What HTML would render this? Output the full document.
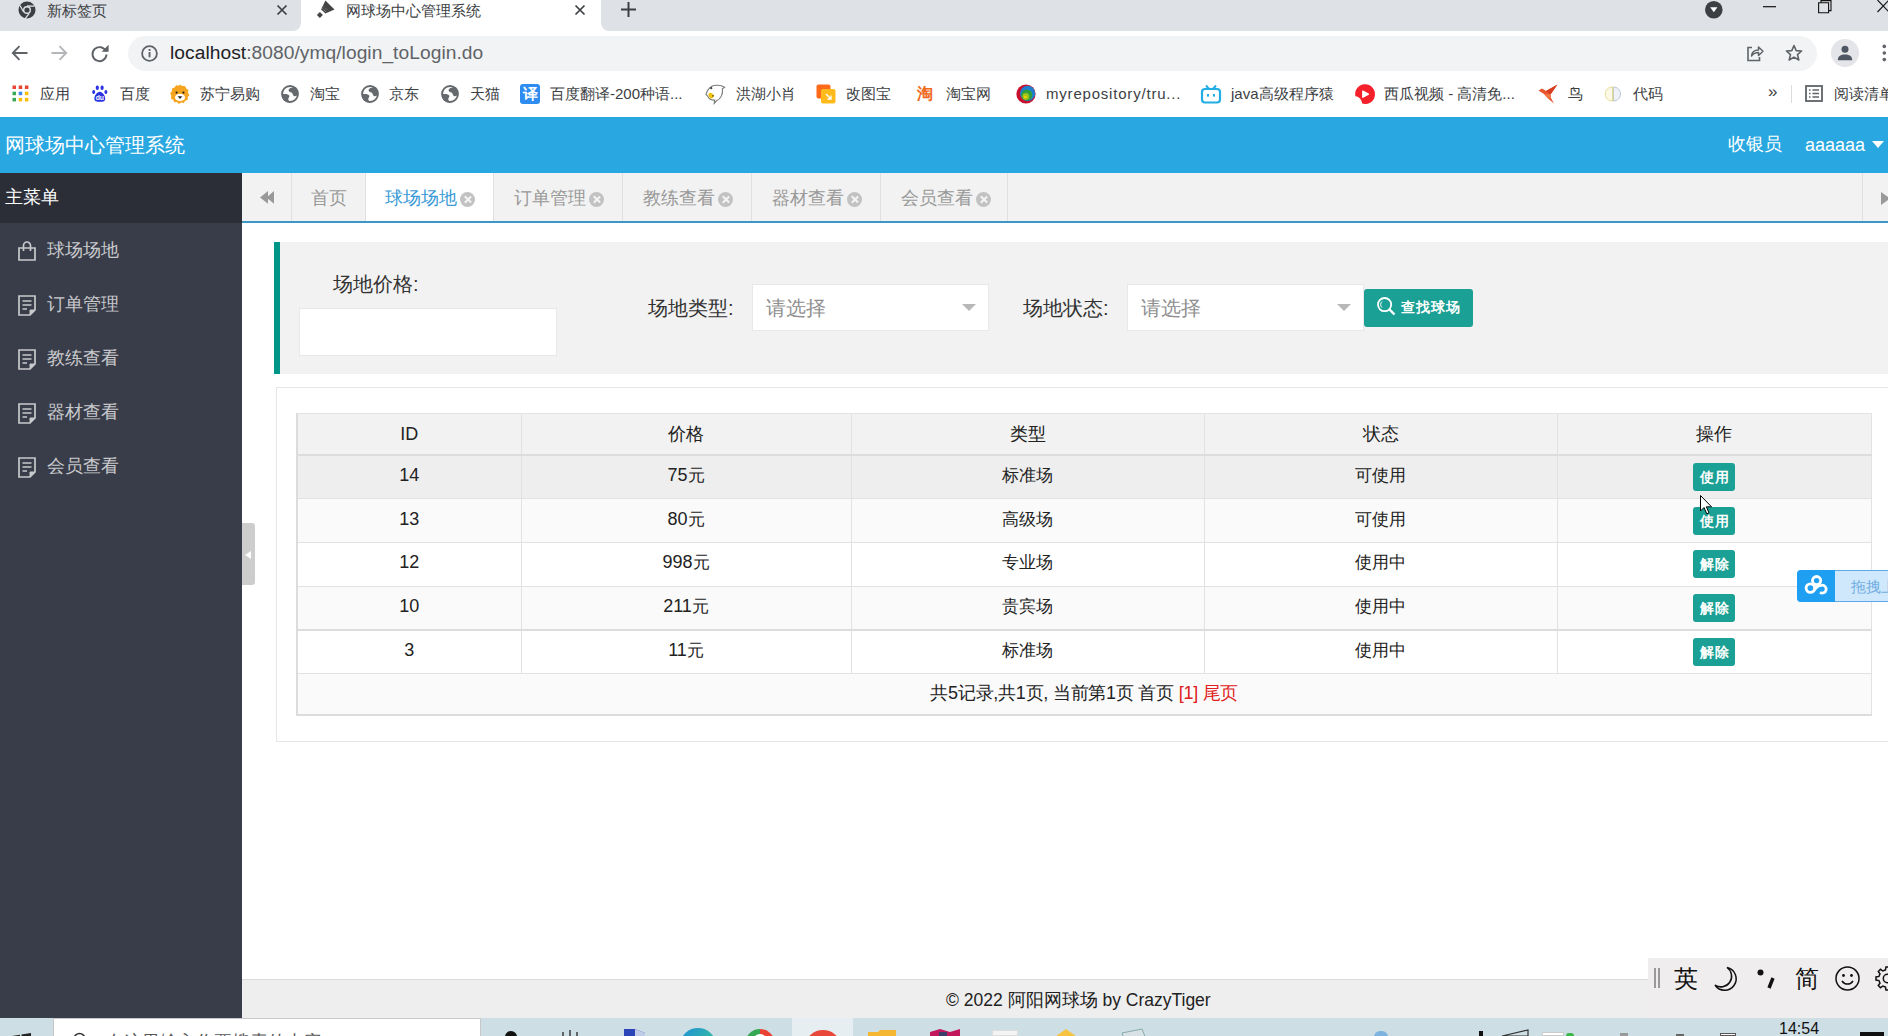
<!DOCTYPE html>
<html><head><meta charset="utf-8">
<style>
*{box-sizing:border-box;margin:0;padding:0}
html,body{width:1888px;height:1036px;overflow:hidden;background:#fff;font-family:"Liberation Sans",sans-serif;position:relative}
.a{position:absolute}
svg{position:absolute;overflow:visible}
.t15{position:absolute;font-size:15px;line-height:20px;color:#3c4043;white-space:nowrap}
/* app */
.mi{position:absolute;left:47px;font-size:18px;color:#c8c9cc;line-height:24px}
.tb{position:absolute;top:0;height:48px;border-left:1px solid #e0e0e0;font-size:18px;color:#999;line-height:50px;white-space:nowrap}
.x{display:inline-block;width:15px;height:15px;border-radius:50%;background:#c2c2c2;position:relative;vertical-align:middle;margin-left:3px;top:0px}
.x:before,.x:after{content:"";position:absolute;left:6.7px;top:3px;width:1.6px;height:9px;background:#f4f4f4;transform:rotate(45deg)}
.x:after{transform:rotate(-45deg)}
.lbl{position:absolute;font-size:20px;color:#333;line-height:24px;white-space:nowrap}
.inp{position:absolute;background:#fff;border:1px solid #e8e8e8}
.ph{position:absolute;font-size:20px;color:#8f8f8f;line-height:24px}
.caret{position:absolute;width:0;height:0;border-left:7px solid transparent;border-right:7px solid transparent;border-top:7px solid #b8b8b8}
table{position:absolute;left:296px;top:413px;border-collapse:collapse;font-size:17px;color:#222}
.n{font-size:18px}
td,th{border:1px solid #e2e2e2;text-align:center;font-weight:normal;height:43.8px;padding:0}
th{height:41.5px;border-bottom:2px solid #dcdcdc;padding-bottom:0;font-size:18px}
td{padding-bottom:3px}
table{border-left:2px solid #dcdcdc;border-bottom:2px solid #dcdcdc}
.r10 td{border-bottom:2px solid #dcdcdc}
.btn{display:inline-block;background:#1aa094;color:#fff;font-size:14px;line-height:28px;width:42px;height:28px;border-radius:3px;font-weight:bold;vertical-align:middle;position:relative;top:1.5px;left:0px;letter-spacing:1px;text-indent:1px}
</style></head><body>

<!-- ============ CHROME TAB STRIP ============ -->
<div class="a" style="left:0;top:0;width:301px;height:31px;background:#dee1e6;border-bottom-right-radius:8px"></div>
<div class="a" style="left:601px;top:0;width:1287px;height:31px;background:#dee1e6;border-bottom-left-radius:8px"></div>
<!-- chrome icon -->
<svg style="left:18px;top:1px" width="18" height="18" viewBox="0 0 18 18">
 <circle cx="9" cy="9" r="8.5" fill="#3c4043"/>
 <circle cx="9" cy="9" r="4" fill="#dee1e6"/>
 <circle cx="9" cy="9" r="2.6" fill="#3c4043"/>
 <path d="M9 5 L16.6 5.2" stroke="#dee1e6" stroke-width="1.3"/>
 <path d="M5.6 11 L2 4.5" stroke="#dee1e6" stroke-width="1.3"/>
 <path d="M11.2 12.3 L7.2 17.6" stroke="#dee1e6" stroke-width="1.3"/>
</svg>
<div class="t15" style="left:47px;top:1px">新标签页</div>
<svg style="left:277px;top:5px" width="10" height="10"><path d="M0.5 0.5L9.5 9.5M9.5 0.5L0.5 9.5" stroke="#3c4043" stroke-width="1.7"/></svg>
<!-- shuttlecock favicon -->
<svg style="left:317px;top:0px" width="19" height="19" viewBox="0 0 19 19"><path d="M8.4 0.5 L17.5 9.5 L8.4 13.5 L4.1 9.5Z" fill="#444"/><path d="M5.6 8.6 L9.6 12.4" stroke="#bbb" stroke-width="1" stroke-dasharray="1 1"/><path d="M7 6.5 L11 10.5" stroke="#999" stroke-width="0.8" stroke-dasharray="1 1.2"/><path d="M2.9 11.9 L5.9 14.9 L2.9 17.9 L-0.1 14.9Z" fill="#444"/></svg>
<div class="t15" style="left:346px;top:1px">网球场中心管理系统</div>
<svg style="left:575px;top:5px" width="10" height="10"><path d="M0.5 0.5L9.5 9.5M9.5 0.5L0.5 9.5" stroke="#3c4043" stroke-width="1.7"/></svg>
<svg style="left:621px;top:2px" width="15" height="15"><path d="M7.5 0V15M0 7.5H15" stroke="#3c4043" stroke-width="2"/></svg>
<!-- window controls -->
<svg style="left:1705px;top:1px" width="18" height="18"><circle cx="8.8" cy="8.8" r="8.8" fill="#3c4043"/><path d="M5.2 6.3H12.4L8.8 11.2Z" fill="#fff"/></svg>
<svg style="left:1763px;top:6px" width="14" height="2"><path d="M0 0.7H13" stroke="#111" stroke-width="1.2"/></svg>
<svg style="left:1818px;top:0px" width="15" height="14"><path d="M0.6 2.8H10.6V12.8H0.6Z M3 2.8V0.6H13V10.6H10.6" fill="none" stroke="#111" stroke-width="1.1"/></svg>
<svg style="left:1877px;top:0px" width="12" height="13"><path d="M0.5 0L12 12M12 0L0.5 12" stroke="#111" stroke-width="1.1"/></svg>

<!-- ============ TOOLBAR ============ -->
<svg style="left:11px;top:44px" width="18" height="18" viewBox="0 0 18 18"><path d="M16.5 9H2 M8.5 2.2L1.8 9L8.5 15.8" fill="none" stroke="#5f6368" stroke-width="1.9"/></svg>
<svg style="left:50px;top:44px" width="18" height="18" viewBox="0 0 18 18"><path d="M1.5 9H16 M9.5 2.2L16.2 9L9.5 15.8" fill="none" stroke="#b4b6ba" stroke-width="1.9"/></svg>
<svg style="left:91px;top:44px" width="18" height="18" viewBox="0 0 18 18"><path d="M15 7.5 A7 7 0 1 0 15.5 10.5" fill="none" stroke="#5f6368" stroke-width="1.9"/><path d="M17.6 0.8V7.8H10.6Z" fill="#5f6368"/></svg>
<div class="a" style="left:128px;top:36px;width:1689px;height:35px;border-radius:17.5px;background:#f1f3f4"></div>
<svg style="left:141px;top:45px" width="17" height="17" viewBox="0 0 17 17"><circle cx="8.5" cy="8.5" r="7.4" fill="none" stroke="#5f6368" stroke-width="1.8"/><rect x="7.6" y="7" width="1.9" height="5.3" fill="#5f6368"/><rect x="7.6" y="4" width="1.9" height="1.9" fill="#5f6368"/></svg>
<div class="a" style="left:170px;top:41px;font-size:19.2px;line-height:24px;color:#202124;white-space:nowrap;letter-spacing:0.05px">localhost<span style="color:#5f6368">:8080/ymq/login_toLogin.do</span></div>
<!-- share -->
<svg style="left:1746px;top:45px" width="18" height="17" viewBox="0 0 18 17"><path d="M6 2.5H2V15.5H13.5V12" fill="none" stroke="#5f6368" stroke-width="1.6"/><path d="M5.5 11 C6 6.5 9 5 12.5 5 V2 L17 6.3 L12.5 10.5 V7.6 C9.5 7.6 7.5 8.5 5.5 11Z" fill="none" stroke="#5f6368" stroke-width="1.5" stroke-linejoin="round"/></svg>
<!-- star -->
<svg style="left:1785px;top:44px" width="18" height="18" viewBox="0 0 18 18"><path d="M9 1.5L11.2 6.6L16.6 7L12.5 10.6L13.8 16L9 13.1L4.2 16L5.5 10.6L1.4 7L6.8 6.6Z" fill="none" stroke="#5f6368" stroke-width="1.6" stroke-linejoin="round"/></svg>
<!-- profile -->
<div class="a" style="left:1831px;top:39px;width:28px;height:28px;border-radius:50%;background:#e3e5e8"></div>
<svg style="left:1837px;top:45px" width="16" height="16" viewBox="0 0 16 16"><circle cx="8" cy="4.3" r="3.5" fill="#4e5563"/><path d="M0.8 15.2C0.8 11 4 9.6 8 9.6S15.2 11 15.2 15.2Z" fill="#4e5563"/></svg>
<svg style="left:1882px;top:44px" width="5" height="18"><circle cx="2.3" cy="2.4" r="1.8" fill="#5f6368"/><circle cx="2.3" cy="9" r="1.8" fill="#5f6368"/><circle cx="2.3" cy="15.6" r="1.8" fill="#5f6368"/></svg>

<!-- ============ BOOKMARKS ============ -->
<svg style="left:12px;top:85px" width="17" height="17" viewBox="0 0 17 17">
 <rect x="0.5" y="0.5" width="3.5" height="3.5" fill="#ea4335"/><rect x="6.7" y="0.5" width="3.5" height="3.5" fill="#ea4335"/><rect x="12.9" y="0.5" width="3.5" height="3.5" fill="#ea4335"/>
 <rect x="0.5" y="6.7" width="3.5" height="3.5" fill="#34a853"/><rect x="6.7" y="6.7" width="3.5" height="3.5" fill="#4285f4"/><rect x="12.9" y="6.7" width="3.5" height="3.5" fill="#fbbc05"/>
 <rect x="0.5" y="12.9" width="3.5" height="3.5" fill="#34a853"/><rect x="6.7" y="12.9" width="3.5" height="3.5" fill="#fbbc05"/><rect x="12.9" y="12.9" width="3.5" height="3.5" fill="#fbbc05"/>
</svg>
<div class="t15" style="left:40px;top:84px">应用</div>
<svg style="left:92px;top:85px" width="17" height="18" viewBox="0 0 17 18"><ellipse cx="5.3" cy="2.8" rx="1.6" ry="2.3" fill="#2932e1"/><ellipse cx="10.1" cy="2.8" rx="1.6" ry="2.3" fill="#2932e1"/><ellipse cx="1.7" cy="7" rx="1.5" ry="2" fill="#2932e1"/><ellipse cx="13.9" cy="7" rx="1.5" ry="2" fill="#2932e1"/><path d="M7.8 6.8C5 6.8 2.2 11 2.4 14 C2.6 17 5.5 16.8 7.8 16.8 S13 17 13.2 14 C13.4 11 10.6 6.8 7.8 6.8Z" fill="#2932e1"/><text x="7.8" y="15.4" font-size="6.8" font-family="Liberation Sans" fill="#fff" text-anchor="middle" font-weight="bold">du</text></svg>
<div class="t15" style="left:120px;top:84px">百度</div>
<svg style="left:170px;top:84px" width="20" height="20" viewBox="0 0 20 20"><path d="M10 0.5 L12.3 2.1 15.1 1.9 16.1 4.5 18.5 5.9 17.9 8.6 19.5 10.9 17.7 13 17.8 15.8 15.2 16.7 13.8 19.1 11 18.6 8.9 19.9 6.9 18.1 4.1 18.3 3.2 15.7 0.8 14.4 1.4 11.7 0.1 9.3 1.9 7.3 2 4.5 4.6 3.6 6.1 1.2 8.8 1.7Z" fill="#f5a51f"/><ellipse cx="10" cy="13.4" rx="5" ry="3.6" fill="#fff"/><circle cx="6.6" cy="8.6" r="1.1" fill="#222"/><circle cx="13.4" cy="8.6" r="1.1" fill="#222"/><path d="M7.7 12.2H12.3L10 15Z" fill="#222"/></svg>
<div class="t15" style="left:200px;top:84px">苏宁易购</div>
<svg style="left:281px;top:85px" width="18" height="18" viewBox="0 0 18 18"><defs><clipPath id="gc1"><circle cx="9" cy="9" r="8.9"/></clipPath></defs><g clip-path="url(#gc1)"><circle cx="9" cy="9" r="9" fill="#fff"/><path d="M10.5 2.8 C8.2 3.2 6.8 5.2 8.2 6.6 C9.8 7.8 11.2 7.2 11.8 9.4 C12.4 11.6 15 11.6 17 10 L17 2 C15 1.5 12.5 2.4 10.5 2.8Z" fill="#65686c"/><path d="M1 9.3 C3.5 8.6 7.6 8.8 8.3 10.6 C8.9 12.2 7 12.8 7.3 14.5 C7.6 15.8 8.8 16.5 9 17.5 L0 17.5Z" fill="#65686c"/></g><circle cx="9" cy="9" r="7.95" fill="none" stroke="#65686c" stroke-width="1.9"/></svg>
<div class="t15" style="left:310px;top:84px">淘宝</div>
<svg style="left:361px;top:85px" width="18" height="18" viewBox="0 0 18 18"><defs><clipPath id="gc2"><circle cx="9" cy="9" r="8.9"/></clipPath></defs><g clip-path="url(#gc2)"><circle cx="9" cy="9" r="9" fill="#fff"/><path d="M10.5 2.8 C8.2 3.2 6.8 5.2 8.2 6.6 C9.8 7.8 11.2 7.2 11.8 9.4 C12.4 11.6 15 11.6 17 10 L17 2 C15 1.5 12.5 2.4 10.5 2.8Z" fill="#65686c"/><path d="M1 9.3 C3.5 8.6 7.6 8.8 8.3 10.6 C8.9 12.2 7 12.8 7.3 14.5 C7.6 15.8 8.8 16.5 9 17.5 L0 17.5Z" fill="#65686c"/></g><circle cx="9" cy="9" r="7.95" fill="none" stroke="#65686c" stroke-width="1.9"/></svg>
<div class="t15" style="left:389px;top:84px">京东</div>
<svg style="left:441px;top:85px" width="18" height="18" viewBox="0 0 18 18"><defs><clipPath id="gc3"><circle cx="9" cy="9" r="8.9"/></clipPath></defs><g clip-path="url(#gc3)"><circle cx="9" cy="9" r="9" fill="#fff"/><path d="M10.5 2.8 C8.2 3.2 6.8 5.2 8.2 6.6 C9.8 7.8 11.2 7.2 11.8 9.4 C12.4 11.6 15 11.6 17 10 L17 2 C15 1.5 12.5 2.4 10.5 2.8Z" fill="#65686c"/><path d="M1 9.3 C3.5 8.6 7.6 8.8 8.3 10.6 C8.9 12.2 7 12.8 7.3 14.5 C7.6 15.8 8.8 16.5 9 17.5 L0 17.5Z" fill="#65686c"/></g><circle cx="9" cy="9" r="7.95" fill="none" stroke="#65686c" stroke-width="1.9"/></svg>
<div class="t15" style="left:470px;top:84px">天猫</div>
<div class="a" style="left:520px;top:84px;width:20px;height:20px;border-radius:3px;background:#2e8cf0;color:#fff;font-size:15px;line-height:20px;text-align:center;font-weight:bold">译</div>
<div class="t15" style="left:550px;top:84px">百度翻译-200种语...</div>
<svg style="left:705px;top:83px" width="22" height="22" viewBox="0 0 22 22"><path d="M6.5 3.5 C9.5 1.5 15.5 1.8 19.6 4.2 L17.4 5.8 C18.2 10.5 16 16 11.5 17.8 L9.2 20.4 L9.6 17 C6.5 17.5 3.5 15 2.2 12.5 L1 11.4 C2.2 7.5 3.8 5.2 6.5 3.5Z" fill="#fff" stroke="#7a7a7a" stroke-width="1.1"/><path d="M3.5 10.5 C5 9 8 10 8.5 12.5 C9 15 6.5 16.5 5 15 C3.8 14 3.2 12 3.5 10.5Z" fill="#f2c40f"/><circle cx="6.2" cy="5.2" r="1.1" fill="#444"/><path d="M7 13 L9 12.8" stroke="#5a3a00" stroke-width="1"/></svg>
<div class="t15" style="left:736px;top:84px">洪湖小肖</div>
<svg style="left:816px;top:84px" width="20" height="20" viewBox="0 0 20 20"><rect x="0.5" y="0.5" width="14" height="14" rx="2" fill="#ff6a1a"/><rect x="5" y="5" width="14.5" height="14.5" rx="2" fill="#ffbb1c"/><path d="M10 10L15 15M15 11.5V15H11.5" stroke="#fff" stroke-width="1.3" fill="none"/></svg>
<div class="t15" style="left:846px;top:84px">改图宝</div>
<div class="a" style="left:917px;top:84px;width:20px;height:20px;color:#f06a1e;font-size:16px;line-height:20px;font-weight:bold">淘</div>
<div class="t15" style="left:946px;top:84px">淘宝网</div>
<svg style="left:1016px;top:84px" width="20" height="20" viewBox="0 0 20 20"><circle cx="10" cy="10" r="9.6" fill="#c8102e"/><circle cx="11.6" cy="9.4" r="7.6" fill="#1d7fd0"/><circle cx="10.8" cy="11" r="5.6" fill="#2e9e3e"/><circle cx="9.8" cy="12.4" r="3.4" fill="#9cc31a"/><circle cx="9.4" cy="13" r="1.5" fill="#f5d000"/></svg>
<div class="t15" style="left:1046px;top:84px;letter-spacing:0.8px">myrepository/tru...</div>
<svg style="left:1201px;top:84px" width="20" height="20" viewBox="0 0 20 20"><rect x="1" y="5" width="18" height="13.5" rx="3" fill="none" stroke="#23ade5" stroke-width="2.2"/><path d="M5 1.5L8 5M15 1.5L12 5" stroke="#23ade5" stroke-width="2"/><rect x="6" y="10" width="2" height="2.6" fill="#23ade5"/><rect x="12" y="10" width="2" height="2.6" fill="#23ade5"/></svg>
<div class="t15" style="left:1231px;top:84px">java高级程序猿</div>
<svg style="left:1355px;top:84px" width="20" height="20" viewBox="0 0 20 20"><path d="M7.2 19.6 A9.9 9.9 0 1 0 0.4 12.2 C3.5 12.4 6.6 15 7.2 19.6Z" fill="#f5202a"/><path d="M7.8 7.2 L13.4 10.2 L7.8 13.2Z" fill="#fff" stroke="#fff" stroke-width="1.4" stroke-linejoin="round"/></svg>
<div class="t15" style="left:1384px;top:84px">西瓜视频 - 高清免...</div>
<svg style="left:1538px;top:84px" width="20" height="20" viewBox="0 0 20 20"><path d="M0.5 6.5 L4 4.5 L8 7 L19.5 0.5 L12.5 10.5 L13 14 L16 19.5 L10 14.5 L6 10Z" fill="#e9552f"/><path d="M8 7 L19.5 0.5 L12.5 10.5Z" fill="#d63c1f"/><path d="M6 10 L12.5 10.5 L13 14 L10 14.5Z" fill="#f07a45"/></svg>
<div class="t15" style="left:1568px;top:84px">鸟</div>
<svg style="left:1604px;top:86px" width="18" height="16" viewBox="0 0 18 16"><path d="M8.6 1 C4 1 1.2 4.2 1.2 8 C1.2 11.8 4 15 8.6 15Z" fill="#fbf9e6" stroke="#e6df90" stroke-width="1"/><path d="M9.4 1 C13.5 1 16.5 4.2 16.5 8 C16.5 11.8 13.5 15 9.4 15Z" fill="#eef2f8" stroke="#b9c3d2" stroke-width="1"/><path d="M9 1V15" stroke="#d8d2a0" stroke-width="1"/></svg>
<div class="t15" style="left:1633px;top:84px">代码</div>
<div class="a" style="left:1768px;top:81px;font-size:17px;line-height:22px;color:#3c4043">»</div>
<div class="a" style="left:1791px;top:85px;width:1px;height:18px;background:#dadce0"></div>
<svg style="left:1805px;top:85px" width="18" height="17" viewBox="0 0 18 17"><rect x="1" y="1" width="16" height="15" fill="none" stroke="#5f6368" stroke-width="1.8"/><path d="M4 5H5.5M4 8.5H5.5M4 12H5.5M7.5 5H14M7.5 8.5H14M7.5 12H14" stroke="#5f6368" stroke-width="1.5"/></svg>
<div class="t15" style="left:1834px;top:84px">阅读清单</div>

<!-- ============ APP HEADER ============ -->
<div class="a" style="left:0;top:117px;width:1888px;height:56px;background:#28a7e1"></div>
<div class="a" style="left:5px;top:133px;font-size:20px;color:#fff;line-height:24px">网球场中心管理系统</div>
<div class="a" style="left:1728px;top:132px;font-size:18px;color:#fff;line-height:24px">收银员</div>
<div class="a" style="left:1805px;top:133px;font-size:18px;color:#fff;line-height:24px">aaaaaa</div>
<div class="a" style="left:1872px;top:141px;width:0;height:0;border-left:6.5px solid transparent;border-right:6.5px solid transparent;border-top:7px solid #fff"></div>

<!-- ============ SIDEBAR ============ -->
<div class="a" style="left:0;top:173px;width:242px;height:845px;background:#393d49"></div>
<div class="a" style="left:0;top:173px;width:242px;height:50px;background:#2b2e37"></div>
<div class="a" style="left:5px;top:185px;font-size:18px;color:#fff;line-height:24px">主菜单</div>
<svg style="left:18px;top:241px" width="18" height="20" viewBox="0 0 18 20"><path d="M1 7H17V19H1Z" fill="none" stroke="#c8c9cc" stroke-width="1.7"/><path d="M5.5 10V4.5A3.5 3.5 0 0 1 12.5 4.5V10" fill="none" stroke="#c8c9cc" stroke-width="1.7"/></svg>
<div class="mi" style="top:238px">球场场地</div>
<svg style="left:18px;top:295px" width="18" height="21" viewBox="0 0 18 21"><path d="M1 1H17V15L12 20H1Z" fill="none" stroke="#c8c9cc" stroke-width="1.7"/><path d="M17 15H12V20" fill="#c8c9cc" stroke="#c8c9cc" stroke-width="1"/><path d="M4.5 6H13.5M4.5 10H13.5M4.5 14H9" stroke="#c8c9cc" stroke-width="1.6"/></svg>
<div class="mi" style="top:292px">订单管理</div>
<svg style="left:18px;top:349px" width="18" height="21" viewBox="0 0 18 21"><path d="M1 1H17V15L12 20H1Z" fill="none" stroke="#c8c9cc" stroke-width="1.7"/><path d="M17 15H12V20" fill="#c8c9cc" stroke="#c8c9cc" stroke-width="1"/><path d="M4.5 6H13.5M4.5 10H13.5M4.5 14H9" stroke="#c8c9cc" stroke-width="1.6"/></svg>
<div class="mi" style="top:346px">教练查看</div>
<svg style="left:18px;top:403px" width="18" height="21" viewBox="0 0 18 21"><path d="M1 1H17V15L12 20H1Z" fill="none" stroke="#c8c9cc" stroke-width="1.7"/><path d="M17 15H12V20" fill="#c8c9cc" stroke="#c8c9cc" stroke-width="1"/><path d="M4.5 6H13.5M4.5 10H13.5M4.5 14H9" stroke="#c8c9cc" stroke-width="1.6"/></svg>
<div class="mi" style="top:400px">器材查看</div>
<svg style="left:18px;top:457px" width="18" height="21" viewBox="0 0 18 21"><path d="M1 1H17V15L12 20H1Z" fill="none" stroke="#c8c9cc" stroke-width="1.7"/><path d="M17 15H12V20" fill="#c8c9cc" stroke="#c8c9cc" stroke-width="1"/><path d="M4.5 6H13.5M4.5 10H13.5M4.5 14H9" stroke="#c8c9cc" stroke-width="1.6"/></svg>
<div class="mi" style="top:454px">会员查看</div>

<!-- collapse handle -->
<div class="a" style="left:242px;top:523px;width:13px;height:62px;background:#cdcdcd;border-radius:0 3px 3px 0"></div>
<div class="a" style="left:245px;top:551px;width:0;height:0;border-top:4px solid transparent;border-bottom:4px solid transparent;border-right:6px solid #fff"></div>

<!-- ============ TAB BAR ============ -->
<div class="a" style="left:242px;top:173px;width:1646px;height:50px;background:#f2f2f2;border-bottom:2px solid #3b98c4">
  <svg style="left:17.5px;top:18px" width="15" height="13" viewBox="0 0 15 13"><path d="M8 0V12.8L0 6.4Z M14 0V12.8L6.5 6.4Z" fill="#999"/></svg>
  <div class="tb" style="left:49px;width:74px;padding-left:19px">首页</div>
  <div class="tb" style="left:123px;width:128px;padding-left:19px;background:#fff;color:#3b9bd6">球场场地<span class="x"></span></div>
  <div class="tb" style="left:251px;width:129px;padding-left:20px">订单管理<span class="x"></span></div>
  <div class="tb" style="left:380px;width:129px;padding-left:20px">教练查看<span class="x"></span></div>
  <div class="tb" style="left:509px;width:129px;padding-left:20px">器材查看<span class="x"></span></div>
  <div class="tb" style="left:638px;width:128px;padding-left:20px;border-right:1px solid #e0e0e0">会员查看<span class="x"></span></div>
  <div class="tb" style="left:1620px;width:26px"></div>
  <svg style="left:1639px;top:19px" width="18" height="13" viewBox="0 0 18 13"><path d="M0 0V13L9 6.5Z M8 0V13L17 6.5Z" fill="#999"/></svg>
</div>

<!-- ============ SEARCH PANEL ============ -->
<div class="a" style="left:274px;top:242px;width:1614px;height:132px;background:#f2f2f2;border-left:6px solid #009688"></div>
<div class="lbl" style="left:333px;top:272px">场地价格:</div>
<div class="inp" style="left:299px;top:308px;width:258px;height:48px"></div>
<div class="lbl" style="left:648px;top:296px">场地类型:</div>
<div class="inp" style="left:752px;top:284px;width:237px;height:47px"></div>
<div class="ph" style="left:766px;top:296px">请选择</div>
<div class="caret" style="left:962px;top:304px"></div>
<div class="lbl" style="left:1023px;top:296px">场地状态:</div>
<div class="inp" style="left:1127px;top:284px;width:237px;height:47px"></div>
<div class="ph" style="left:1141px;top:296px">请选择</div>
<div class="caret" style="left:1337px;top:304px"></div>
<div class="a" style="left:1364px;top:289px;width:109px;height:38px;background:#1aa094;border-radius:3px"></div>
<svg style="left:1377px;top:297px" width="20" height="19" viewBox="0 0 20 19"><circle cx="7.6" cy="7.6" r="6.6" fill="none" stroke="#fff" stroke-width="1.8"/><path d="M12.4 12.4L17.5 17.5" stroke="#fff" stroke-width="2.4"/><path d="M5 4.5A4 4 0 0 0 5 10.5" fill="none" stroke="#fff" stroke-width="1"/></svg>
<div class="a" style="left:1401px;top:297px;font-size:14px;line-height:20px;color:#fff;font-weight:bold;letter-spacing:1px">查找球场</div>

<!-- ============ CARD & TABLE ============ -->
<div class="a" style="left:276px;top:387px;width:1620px;height:355px;border:1px solid #e6e6e6;background:#fff"></div>
<table>
<tr style="background:#f2f2f2"><th style="width:224px" class="n">ID</th><th style="width:330px">价格</th><th style="width:353px">类型</th><th style="width:353px">状态</th><th style="width:314px">操作</th></tr>
<tr style="background:#eeeeee"><td class="n">14</td><td><span class="n">75</span>元</td><td>标准场</td><td>可使用</td><td><span class="btn">使用</span></td></tr>
<tr style="background:#fafafa"><td class="n">13</td><td><span class="n">80</span>元</td><td>高级场</td><td>可使用</td><td><span class="btn">使用</span></td></tr>
<tr><td class="n">12</td><td><span class="n">998</span>元</td><td>专业场</td><td>使用中</td><td><span class="btn">解除</span></td></tr>
<tr class="r10" style="background:#fafafa"><td class="n">10</td><td><span class="n">211</span>元</td><td>贵宾场</td><td>使用中</td><td><span class="btn">解除</span></td></tr>
<tr><td class="n">3</td><td><span class="n">11</span>元</td><td>标准场</td><td>使用中</td><td><span class="btn">解除</span></td></tr>
<tr style="background:#fafafa"><td colspan="5" style="height:41.5px;font-size:18px;letter-spacing:-0.25px;padding-bottom:3px">共5记录,共1页, 当前第1页 首页 <span style="color:#e02020">[1] 尾页</span></td></tr>
</table>

<!-- mouse cursor -->
<svg style="left:1700px;top:495px" width="13" height="20" viewBox="0 0 13 20"><path d="M0.5 0.5V16L4 12.5L6.8 18.8L9 17.8L6.3 11.8H11.5Z" fill="#fff" stroke="#000" stroke-width="1"/></svg>

<!-- baidu netdisk widget -->
<div class="a" style="left:1797px;top:570px;width:100px;height:32px;background:#cfe8fb;border:1.5px solid #5aa9ea;border-radius:4px 0 0 4px"></div>
<div class="a" style="left:1797px;top:570px;width:38px;height:32px;background:#1e9ff2;border-radius:4px 0 0 4px"></div>
<svg style="left:1804px;top:574px" width="26" height="24" viewBox="0 0 26 24"><circle cx="12.6" cy="6.6" r="4.1" fill="none" stroke="#fff" stroke-width="2.8"/><circle cx="6.4" cy="14.1" r="4.3" fill="none" stroke="#fff" stroke-width="2.8"/><path d="M9.5 17.2 C11.5 14 13.5 11.2 17.5 11.3 A3.9 3.9 0 1 1 16 18.3" fill="none" stroke="#fff" stroke-width="2.8"/></svg>
<div class="a" style="left:1851px;top:577px;font-size:15px;line-height:20px;color:#72aee3;white-space:nowrap">拖拽上传</div>

<!-- ============ FOOTER ============ -->
<div class="a" style="left:242px;top:979px;width:1646px;height:39px;background:#eeeeee;border-top:1px solid #d9d9d9"></div>
<div class="a" style="left:946px;top:988px;font-size:17.5px;line-height:24px;color:#222;white-space:nowrap">© 2022 阿阳网球场 by CrazyTiger</div>

<!-- IME toolbar -->
<div class="a" style="left:1648px;top:958px;width:240px;height:60px;background:#efeded"></div>
<div class="a" style="left:1654px;top:968px;width:1.5px;height:20px;background:#999"></div>
<div class="a" style="left:1658px;top:968px;width:1.5px;height:20px;background:#999"></div>
<div class="a" style="left:1674px;top:965px;font-size:24px;line-height:28px;color:#111">英</div>
<svg style="left:1714px;top:966px" width="26" height="26" viewBox="0 0 26 26"><path d="M13 1.5 A11.5 11.5 0 1 1 1 19 A10 10 0 0 0 13 1.5Z" fill="none" stroke="#111" stroke-width="1.5"/></svg>
<svg style="left:1757px;top:969px" width="20" height="22" viewBox="0 0 20 22"><circle cx="3.5" cy="3.5" r="3" fill="#111"/><path d="M16 9L12 19" stroke="#111" stroke-width="3.4"/></svg>
<div class="a" style="left:1795px;top:965px;font-size:24px;line-height:28px;color:#111">简</div>
<svg style="left:1835px;top:966px" width="25" height="25" viewBox="0 0 25 25"><circle cx="12.5" cy="12.5" r="11.5" fill="none" stroke="#111" stroke-width="1.5"/><circle cx="8.5" cy="9.5" r="1.4" fill="#111"/><circle cx="16.5" cy="9.5" r="1.4" fill="#111"/><path d="M7 15A6.5 6.5 0 0 0 18 15" fill="none" stroke="#111" stroke-width="1.5"/></svg>
<svg style="left:1875px;top:966px" width="25" height="25" viewBox="0 0 25 25"><path d="M10.45 3.94 L10.96 1.00 L14.04 1.00 L14.55 3.94 L17.10 5.00 L19.54 3.28 L21.72 5.46 L20.00 7.90 L21.06 10.45 L24.00 10.96 L24.00 14.04 L21.06 14.55 L20.00 17.10 L21.72 19.54 L19.54 21.72 L17.10 20.00 L14.55 21.06 L14.04 24.00 L10.96 24.00 L10.45 21.06 L7.90 20.00 L5.46 21.72 L3.28 19.54 L5.00 17.10 L3.94 14.55 L1.00 14.04 L1.00 10.96 L3.94 10.45 L5.00 7.90 L3.28 5.46 L5.46 3.28 L7.90 5.00Z" fill="none" stroke="#111" stroke-width="1.5" stroke-linejoin="miter"/><circle cx="12.5" cy="12.5" r="4.2" fill="none" stroke="#111" stroke-width="1.5"/></svg>

<!-- ============ TASKBAR ============ -->
<div class="a" style="left:0;top:1018px;width:1888px;height:18px;background:#cddee5"></div>
<div class="a" style="left:53px;top:1018px;width:428px;height:18px;background:#fff;border:1px solid #c8c8c8;border-bottom:none"></div>
<svg style="left:12px;top:1033px" width="20" height="8"><path d="M0 3L8 1.8V8H0Z M9.5 1.6L19 0V8H9.5Z" fill="#222"/></svg>
<svg style="left:73px;top:1032px" width="14" height="10"><circle cx="6.5" cy="7" r="5.5" fill="none" stroke="#333" stroke-width="1.5"/></svg>
<div class="a" style="left:106px;top:1031px;font-size:18px;line-height:22px;color:#555;white-space:nowrap">在这里输入你要搜索的内容</div>
<div class="a" style="left:792px;top:1018px;width:61px;height:18px;background:#e6eef2"></div>
<svg style="left:503px;top:1029px" width="16" height="8"><circle cx="8" cy="8" r="6" fill="#111"/></svg>
<svg style="left:560px;top:1030px" width="20" height="9"><path d="M3 2V9M10 0V9M17 2V9" stroke="#333" stroke-width="1.4"/></svg>
<svg style="left:623px;top:1029px" width="24" height="10"><path d="M1 0H12L22 4V10H1Z" fill="#2b45b8"/><path d="M12 0L22 4V10H12Z" fill="#c0cbe8"/></svg>
<div class="a" style="left:681px;top:1028px;width:34px;height:30px;border-radius:50%;background:linear-gradient(135deg,#1f8fd8,#3fd08a)"></div>
<div class="a" style="left:745px;top:1029px;width:30px;height:30px;border-radius:50%;background:conic-gradient(#ea4335 0 33%,#fbbc05 0 66%,#34a853 0)"></div>
<div class="a" style="left:753px;top:1034px;width:14px;height:14px;border-radius:50%;background:#4285f4;border:2px solid #fff"></div>
<div class="a" style="left:806px;top:1030px;width:34px;height:30px;border-radius:50%;background:#e8473a"></div>
<svg style="left:868px;top:1030px" width="28" height="9"><path d="M0 2H10L12 0H28V9H0Z" fill="#f5b731"/></svg>
<svg style="left:930px;top:1029px" width="30" height="10"><path d="M0 3L10 0 20 3 30 0V10H0Z" fill="#c2185b"/><rect x="9" y="3" width="8" height="7" fill="#3d3d6a"/></svg>
<div class="a" style="left:992px;top:1030px;width:26px;height:6px;background:#f4f4f4;border:1px solid #ddd"></div>
<svg style="left:1052px;top:1029px" width="28" height="10"><path d="M0 10L14 0 28 10Z" fill="#f5c242"/></svg>
<svg style="left:1122px;top:1029px" width="24" height="10"><path d="M0 4L20 0 24 10H2Z" fill="#d8e2e6" stroke="#8aa" stroke-width="1"/></svg>
<div class="a" style="left:1374px;top:1031px;width:14px;height:6px;border-radius:7px 7px 0 0;background:#7cb6e0"></div>
<div class="a" style="left:1479px;top:1031px;width:4px;height:5px;background:#111"></div>
<svg style="left:1502px;top:1030px" width="26" height="6"><path d="M0 6L26 0V6Z" fill="none" stroke="#333" stroke-width="1.2"/></svg>
<div class="a" style="left:1542px;top:1032px;width:22px;height:4px;background:#fff;border:1px solid #ccc"></div>
<div class="a" style="left:1566px;top:1033px;width:8px;height:3px;border-radius:4px 4px 0 0;background:#3bb54a"></div>
<div class="a" style="left:1620px;top:1033px;width:8px;height:3px;background:#999"></div>
<div class="a" style="left:1676px;top:1034px;width:8px;height:2px;background:#666"></div>
<div class="a" style="left:1720px;top:1033px;width:16px;height:3px;background:#fff;border:1px solid #555"></div>
<div class="a" style="left:1779px;top:1020px;font-size:16px;line-height:18px;color:#111">14:54</div>
<div class="a" style="left:1860px;top:1032px;width:24px;height:4px;background:#111"></div>
</body></html>
